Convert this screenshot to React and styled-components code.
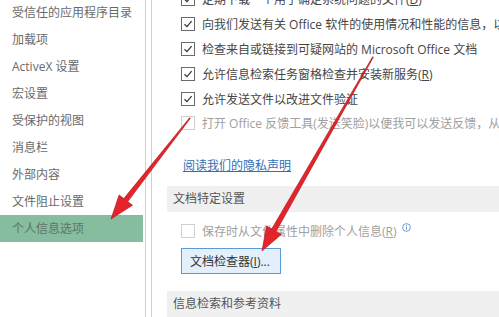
import React from "react";
import styled, { createGlobalStyle } from "styled-components";

const Global = createGlobalStyle`
  html, body { margin: 0; padding: 0; background: #fff; overflow: hidden; }
  body { font-family: "Open Sans", "Noto Sans CJK SC", sans-serif; }
`;

const Page = styled.div`
  position: relative;
  display: flex;
  width: 499px;
  height: 317px;
  overflow: hidden;
  background: #fff;
`;

const Sidebar = styled.nav`
  width: 145px;
  flex: none;
  border-right: 1px solid #cfcfcf;
  display: flex;
  flex-direction: column;
  margin-top: -1px;
`;

const NavItem = styled.div`
  height: 27px;
  line-height: 27px;
  margin-right: 2px;
  padding-left: 12px;
  font-size: 12px;
  white-space: nowrap;
  background: ${(p) => (p.$active ? "#86bd9f" : "transparent")};
  color: ${(p) => (p.$active ? "#5e7568" : "#6a6a6a")};
`;

const Gutter = styled.div`
  width: 5px;
  flex: none;
  border-right: 1px solid #cfcfcf;
`;

const Main = styled.main`
  flex: 1;
  min-width: 0;
  overflow: hidden;
  display: flex;
  flex-direction: column;
  margin-top: -13px;
`;

const Row = styled.div`
  display: flex;
  align-items: center;
  height: 25.5px;
  padding-left: 29px;
  gap: 7px;
  font-size: 12px;
  color: ${(p) => (p.$disabled ? "#a0a0a0" : "#454545")};
  white-space: nowrap;
`;

const Box = styled.span`
  width: 12px;
  height: 12px;
  flex: none;
  border: 1px solid ${(p) => (p.$disabled ? "#d0d0d0" : "#6a6a6a")};
  background: #fff;
  display: flex;
  align-items: center;
  justify-content: center;
`;

const Link = styled.a`
  display: block;
  margin: 20px 0 0 31px;
  font-size: 12px;
  color: #2f6fb3;
  text-decoration: underline;
  white-space: nowrap;
`;

const Section = styled.div`
  margin: ${(p) => p.$top}px 0 0 15px;
  height: 26px;
  line-height: 26px;
  padding-left: 6px;
  background: #f0f0f0;
  font-size: 12px;
  color: #555;
  white-space: nowrap;
`;

const Button = styled.button`
  margin: 4px 0 0 29px;
  width: 100px;
  height: 27px;
  padding: 0 0 0 8px;
  text-align: left;
  font-family: inherit;
  font-size: 12px;
  color: #333;
  background: #e3f0fb;
  border: 1px solid #5b9bd5;
  border-radius: 0;
  align-self: flex-start;
`;

const Info = styled.span`
  display: inline-flex;
  margin-left: -2px;
  margin-top: -8px;
  color: #4a86c8;
`;

const Overlay = styled.svg`
  position: absolute;
  left: 0;
  top: 0;
  pointer-events: none;
`;

const Check = () => (
  <svg width="10" height="10" viewBox="0 0 10 10">
    <path d="M1.5 5.2 L4 7.6 L8.6 2.2" fill="none" stroke="#333" strokeWidth="1.2" />
  </svg>
);

const InfoIcon = () => (
  <svg width="9" height="9" viewBox="0 0 10 10">
    <circle cx="5" cy="5" r="4.3" fill="none" stroke="currentColor" strokeWidth="0.9" />
    <rect x="4.5" y="4.2" width="1" height="3.3" fill="currentColor" />
    <rect x="4.5" y="2.4" width="1" height="1" fill="currentColor" />
  </svg>
);

function arrowPoints(sx, sy, tx, ty, w0, w1, L, W) {
  const dx = tx - sx, dy = ty - sy;
  const len = Math.hypot(dx, dy);
  const ux = dx / len, uy = dy / len;
  const nx = -uy, ny = ux;
  const bx = tx - ux * L, by = ty - uy * L;
  const pts = [
    [sx + nx * w0 / 2, sy + ny * w0 / 2],
    [bx + nx * w1 / 2, by + ny * w1 / 2],
    [bx + nx * W / 2, by + ny * W / 2],
    [tx, ty],
    [bx - nx * W / 2, by - ny * W / 2],
    [bx - nx * w1 / 2, by - ny * w1 / 2],
    [sx - nx * w0 / 2, sy - ny * w0 / 2],
  ];
  return pts.map((p) => p.map((v) => v.toFixed(1)).join(",")).join(" ");
}

const nav = [
  "受信任的应用程序目录",
  "加载项",
  "ActiveX 设置",
  "宏设置",
  "受保护的视图",
  "消息栏",
  "外部内容",
  "文件阻止设置",
  "个人信息选项",
];

export default function App() {
  return (
    <Page>
      <Global />
      <Sidebar>
        {nav.map((n, i) => (
          <NavItem key={n} $active={i === nav.length - 1}>
            {n}
          </NavItem>
        ))}
      </Sidebar>
      <Gutter />
      <Main>
        <Row>
          <Box><Check /></Box>
          <span>定期下载一个用于确定系统问题的文件(<u>D</u>)</span>
        </Row>
        <Row>
          <Box><Check /></Box>
          <span>向我们发送有关 Office 软件的使用情况和性能的信息，以</span>
        </Row>
        <Row>
          <Box><Check /></Box>
          <span>检查来自或链接到可疑网站的 Microsoft Office 文档</span>
        </Row>
        <Row>
          <Box><Check /></Box>
          <span>允许信息检索任务窗格检查并安装新服务(<u>R</u>)</span>
        </Row>
        <Row>
          <Box><Check /></Box>
          <span>允许发送文件以改进文件验证</span>
        </Row>
        <Row $disabled>
          <Box $disabled />
          <span>打开 Office 反馈工具(发送笑脸)以便我可以发送反馈，从而</span>
        </Row>
        <Link>阅读我们的隐私声明</Link>
        <Section $top={12}>文档特定设置</Section>
        <Row style={{ marginTop: 7 }} $disabled>
          <Box $disabled />
          <span>
            保存时从文件属性中删除个人信息(<u>R</u>)
          </span>
          <Info><InfoIcon /></Info>
        </Row>
        <Button>文档检查器(<u>I</u>)...</Button>
        <Section $top={17}>信息检索和参考资料</Section>
      </Main>
      <Overlay width="499" height="317" viewBox="0 0 499 317">
        <polygon
          points={arrowPoints(190, 118, 111, 219, 1, 5, 24, 17)}
          fill="#e3252b"
          stroke="#a81418"
          strokeWidth="0.6"
        />
        <polygon
          points={arrowPoints(373, 57, 262, 251, 1, 5, 24, 17)}
          fill="#e3252b"
          stroke="#a81418"
          strokeWidth="0.6"
        />
      </Overlay>
    </Page>
  );
}
